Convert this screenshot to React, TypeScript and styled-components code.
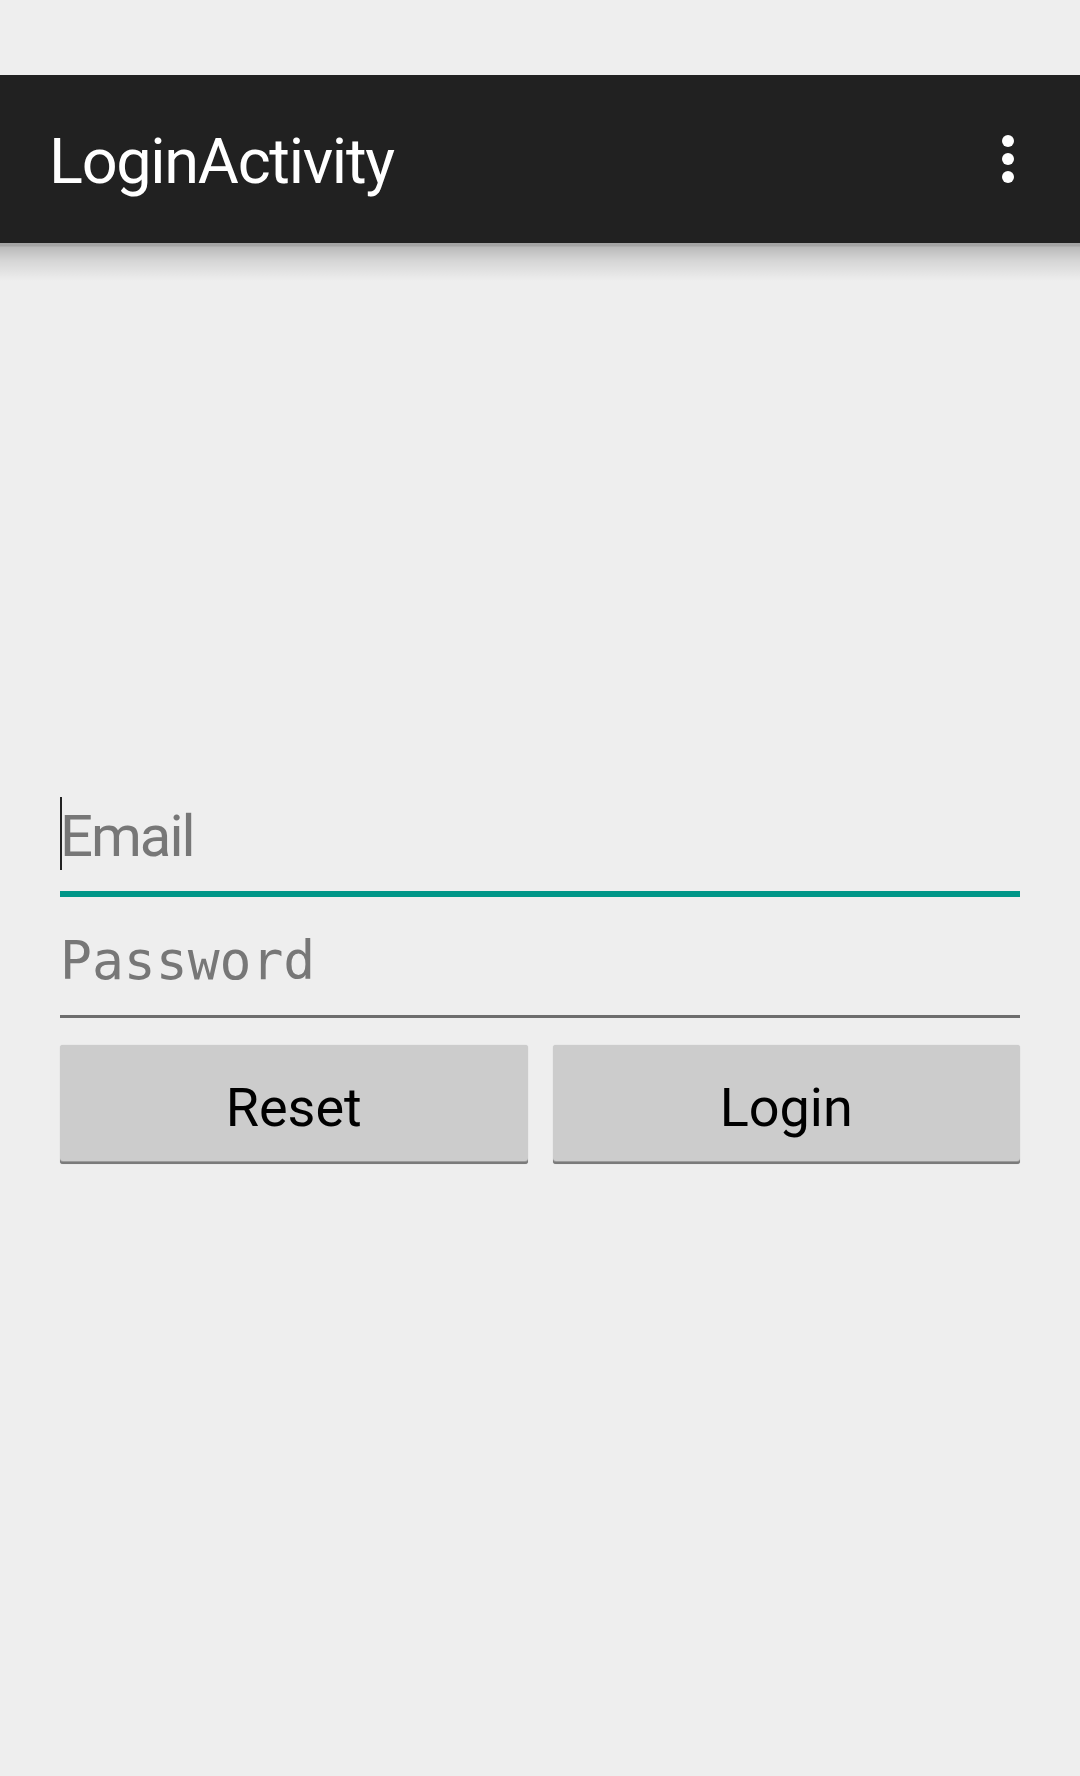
import React from "react";
import styled, { createGlobalStyle } from "styled-components";

const GlobalStyle = createGlobalStyle`
  html, body {
    margin: 0;
    padding: 0;
    background: #eeeeee;
  }
  body {
    font-family: Roboto, "Noto Sans", sans-serif;
  }
`;

const Screen = styled.div`
  width: 1080px;
  min-height: 1776px;
  background: #eeeeee;
  display: flex;
  flex-direction: column;
`;

const StatusSpace = styled.div`
  height: 75px;
  background: #eeeeee;
`;

const Toolbar = styled.header`
  position: relative;
  z-index: 1;
  height: 168px;
  background: #212121;
  display: flex;
  align-items: center;
  justify-content: space-between;
  padding: 4px 66px 0 49px;
  box-sizing: border-box;

  &::after {
    content: "";
    position: absolute;
    left: 0;
    right: 0;
    top: 100%;
    height: 38px;
    pointer-events: none;
    background: linear-gradient(
      to bottom,
      rgba(0, 0, 0, 0.31) 0px,
      rgba(0, 0, 0, 0.31) 3px,
      rgba(0, 0, 0, 0.22) 4px,
      rgba(0, 0, 0, 0.1) 18px,
      rgba(0, 0, 0, 0) 100%
    );
  }
`;

const Title = styled.h1`
  margin: 0;
  font-family: Roboto, sans-serif;
  font-weight: 400;
  font-size: 63px;
  letter-spacing: -1.3px;
  line-height: 1;
  color: #ffffff;
`;

const OverflowButton = styled.svg`
  display: block;
  width: 12px;
  height: 48px;
  margin-top: -4px;
`;

const Form = styled.main`
  display: flex;
  flex-direction: column;
  padding: 554px 60px 0 60px;
`;

const Field = styled.div<{ $focused?: boolean; $pt: number; $pb: number }>`
  position: relative;
  padding: ${(p) => p.$pt}px 0 ${(p) => p.$pb}px 0;
  border-bottom: ${(p) => (p.$focused ? "6px solid #009688" : "3px solid #6d6d6d")};
`;

const Placeholder = styled.div<{ $mono?: boolean; $size: number; $lh: number; $ls?: number }>`
  font-family: ${(p) =>
    p.$mono ? '"DejaVu Sans Mono", "Liberation Mono", monospace' : "Roboto, sans-serif"};
  font-size: ${(p) => p.$size}px;
  line-height: ${(p) => p.$lh}px;
  letter-spacing: ${(p) => p.$ls ?? 0}px;
  color: #777777;
  white-space: nowrap;
`;

const Caret = styled.span`
  position: absolute;
  left: 0;
  top: 0;
  width: 2px;
  height: 73px;
  background: #222222;
`;

const ButtonRow = styled.div`
  display: grid;
  grid-template-columns: 1fr 1fr;
  column-gap: 25px;
  margin-top: 27px;
`;

const Button = styled.button`
  height: 119px;
  border: none;
  border-radius: 3px;
  background: #cccccc;
  box-shadow: inset 0 -2px 0 #7a7a7a, inset 0 -3px 0 #9a9a9a, 0 0 1px rgba(0, 0, 0, 0.2);
  font-family: Roboto, sans-serif;
  font-size: 54px;
  font-weight: 400;
  color: #000000;
  padding: 5px 0 0 0;
  cursor: pointer;
`;

export default function App() {
  return (
    <>
      <GlobalStyle />
      <Screen>
        <StatusSpace />
        <Toolbar>
          <Title>LoginActivity</Title>
          <OverflowButton viewBox="0 0 12 48" aria-label="More options">
            <circle cx="6" cy="6" r="6" fill="#ffffff" />
            <circle cx="6" cy="24" r="6" fill="#ffffff" />
            <circle cx="6" cy="42" r="6" fill="#ffffff" />
          </OverflowButton>
        </Toolbar>
        <Form>
          <Field $focused $pt={0} $pb={16}>
            <Caret />
            <Placeholder $size={58} $lh={78} $ls={-2}>Email</Placeholder>
          </Field>
          <Field $pt={29} $pb={19}>
            <Placeholder $mono $size={53} $lh={70}>Password</Placeholder>
          </Field>
          <ButtonRow>
            <Button>Reset</Button>
            <Button>Login</Button>
          </ButtonRow>
        </Form>
      </Screen>
    </>
  );
}
